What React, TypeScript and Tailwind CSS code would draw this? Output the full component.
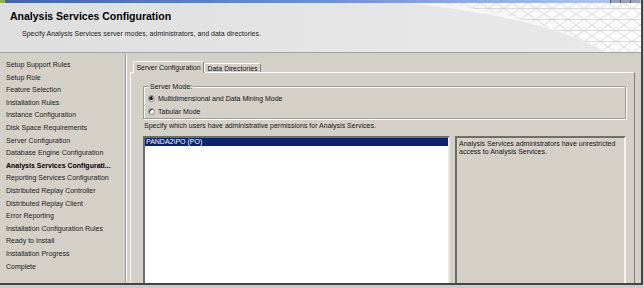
import React from 'react';

const steps = [
  'Setup Support Rules',
  'Setup Role',
  'Feature Selection',
  'Installation Rules',
  'Instance Configuration',
  'Disk Space Requirements',
  'Server Configuration',
  'Database Engine Configuration',
  'Analysis Services Configurati...',
  'Reporting Services Configuration',
  'Distributed Replay Controller',
  'Distributed Replay Client',
  'Error Reporting',
  'Installation Configuration Rules',
  'Ready to Install',
  'Installation Progress',
  'Complete',
];

const ACTIVE = 'Analysis Services Configurati...';

function Radio({ checked, label }: { checked: boolean; label: string }) {
  return (
    <div className="flex items-center h-[9px] gap-[3px]">
      <span className="w-[7px] h-[7px] rounded-full border border-[#808080] bg-white flex items-center justify-center shadow-[inset_1px_1px_0_#404040]">
        {checked && <span className="w-[3px] h-[3px] rounded-full bg-black" />}
      </span>
      <span className="leading-[9px]">{label}</span>
    </div>
  );
}

function HeaderArt() {
  return (
    <svg className="absolute inset-0" width="641" height="49" viewBox="0 0 641 49">
      <defs>
        <pattern id="mesh" width="16" height="11" patternUnits="userSpaceOnUse">
          <path d="M0 0 L16 11 M16 0 L0 11 M0 5.5 L16 5.5" stroke="#d2d2d2" strokeWidth="0.8" fill="none" />
        </pattern>
        <linearGradient id="fade" x1="0" y1="0" x2="1" y2="0">
          <stop offset="0" stopColor="#ececec" />
          <stop offset="0.3" stopColor="#f7f7f7" />
          <stop offset="1" stopColor="#ffffff" />
        </linearGradient>
        <linearGradient id="hdr" x1="0" y1="0" x2="1" y2="0">
          <stop offset="0" stopColor="#dedede" />
          <stop offset="0.6" stopColor="#e6e6e6" />
          <stop offset="1" stopColor="#e8e8e8" />
        </linearGradient>
      </defs>
      <rect width="641" height="49" fill="url(#hdr)" />
      <path d="M402 0 C470 6 555 20 606 49 L641 49 L641 0 Z" fill="url(#fade)" />
      <path d="M440 0 C495 8 562 24 606 49 L641 49 L641 0 Z" fill="url(#mesh)" />
    </svg>
  );
}

export default function App() {
  return (
    <div className="w-[644px] h-[288px] bg-[#cbcbcb] overflow-hidden font-['Liberation_Sans',Arial,sans-serif] text-[#111]">
      <div className="w-[643px] h-[285px] border-r-2 border-b-2 border-[#454545] flex flex-col">
        {/* title bar strip */}
        <div className="relative h-[3px] bg-gradient-to-r from-[#3f64ad] via-[#6d90cf] to-[#b3cdef]">
          <span className="absolute left-0 top-0 w-[5px] h-[3px] bg-[#8bb04a]" />
          <div className="absolute right-[1px] top-0 flex">
            <span className="w-[10px] h-[3px] bg-[#9aa4b4] border-l border-[#555]" />
            <span className="w-[10px] h-[3px] bg-[#9aa4b4] border-l border-[#555]" />
            <span className="w-[10px] h-[3px] bg-[#9aa4b4] border-l border-[#555]" />
          </div>
        </div>

        {/* header */}
        <div className="relative h-[50px] border-b border-[#a3a3a3]">
          <HeaderArt />
          <div className="relative pl-[10px] pt-[7px]">
            <div className="text-[10.5px] leading-[13px] font-bold text-black">Analysis Services Configuration</div>
            <div className="pl-[12px] mt-[6px] text-[7px] leading-[9px] text-[#222]">
              Specify Analysis Services server modes, administrators, and data directories.
            </div>
          </div>
        </div>

        {/* body */}
        <div className="flex-1 flex bg-[#d4d0c8] overflow-hidden">
          <div className="w-[126px] border-r border-[#a09c94] pt-[6px] pl-[6px]">
            {steps.map(s => (
              <div
                key={s}
                className={`text-[7px] leading-[12.6px] whitespace-nowrap ${s === ACTIVE ? 'font-bold text-black' : 'text-[#1a1a1a]'}`}
              >
                {s}
              </div>
            ))}
          </div>

          <div className="flex-1 border-l border-white pl-[3px] pt-[8px] text-[7px]">
            {/* tabs */}
            <div className="relative h-[11px] w-[505px]">
              <div className="absolute left-[3px] top-0 w-[71px] h-[12px] bg-[#d4d0c8] border-t border-l border-white border-r border-r-[#808080] rounded-t-[2px] z-10 flex items-center justify-center leading-[10px]">
                Server Configuration
              </div>
              <div className="absolute left-[74px] top-[2px] w-[57px] h-[9px] border-t border-l border-white border-r border-r-[#808080] rounded-t-[2px] flex items-center justify-center leading-[9px]">
                Data Directories
              </div>
            </div>

            {/* tab panel */}
            <div className="w-[505px] h-[220px] border-t border-l border-white border-r border-r-[#808080] pl-[12px] pt-[13px]">
              <div className="relative w-[483px] h-[33px] border border-[#a09c94] shadow-[inset_1px_1px_0_#fff,1px_1px_0_#fff] pl-[4px] pt-[7px] flex flex-col gap-[4px]">
                <span className="absolute -top-[5px] left-[5px] px-[1px] bg-[#d4d0c8] leading-[9px]">Server Mode:</span>
                <Radio checked label="Multidimensional and Data Mining Mode" />
                <Radio checked={false} label="Tabular Mode" />
              </div>

              <div className="mt-[2px] leading-[9px] pl-[1px]">
                Specify which users have administrative permissions for Analysis Services.
              </div>

              <div className="mt-[6px] flex gap-[5px]">
                <div className="w-[307px] h-[160px] bg-white border-2 border-t-[#6f6d68] border-l-[#6f6d68] border-r-[#ece9e2] border-b-[#ece9e2]">
                  <div className="h-[8px] bg-[#0a246a] text-white leading-[8px] pl-[1px]">PANDA2\PO (PO)</div>
                </div>
                <div className="w-[171px] h-[160px] border-2 border-t-[#6f6d68] border-l-[#6f6d68] border-r-[#f4f2ee] border-b-[#f4f2ee] pl-[2px] pt-[2px] leading-[8px]">
                  Analysis Services administrators have unrestricted access to Analysis Services.
                </div>
              </div>
            </div>
          </div>
        </div>
      </div>
    </div>
  );
}
